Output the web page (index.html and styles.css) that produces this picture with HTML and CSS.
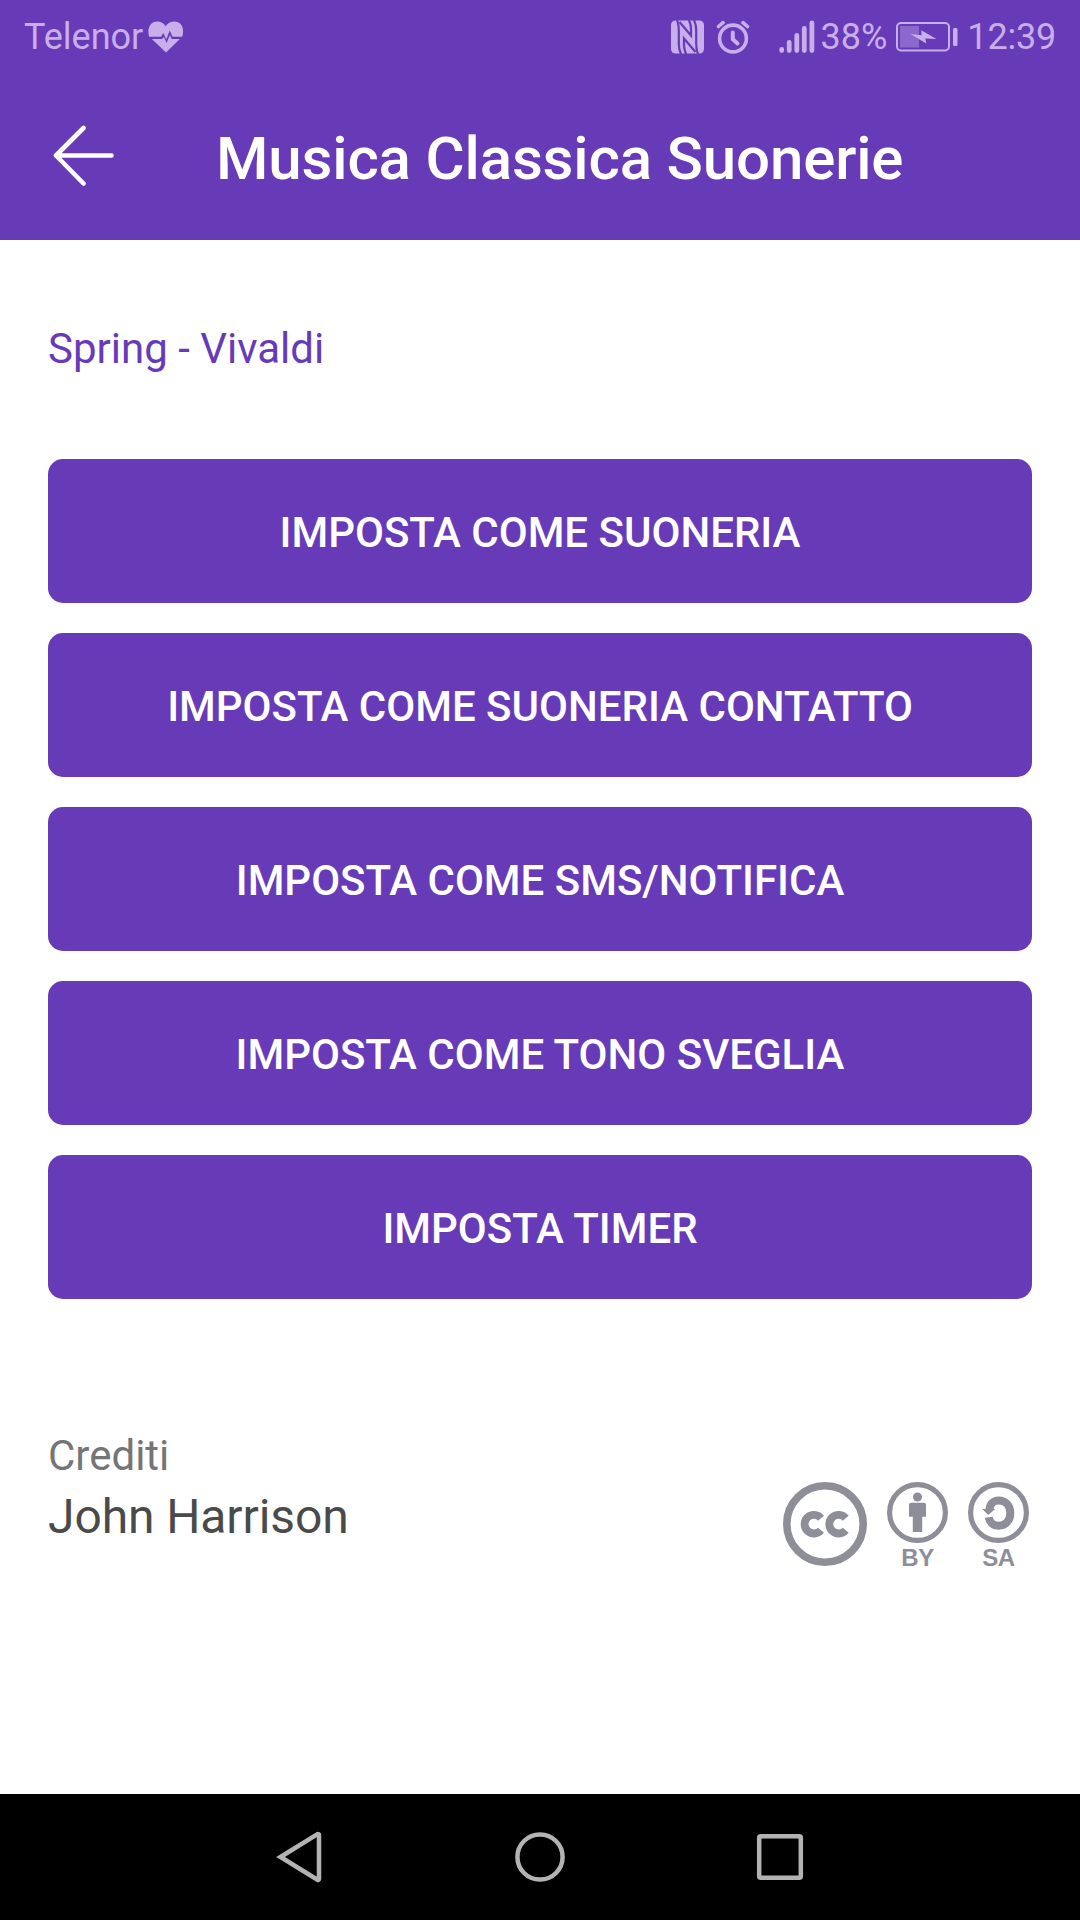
FILE: index.html
```html
<!DOCTYPE html>
<html lang="it">
<head>
  <meta charset="UTF-8">
  <meta name="viewport" content="width=device-width, initial-scale=1.0">
  <title>Musica Classica Suonerie</title>
  <link rel="stylesheet" href="styles.css">
</head>
<body>
  <div class="header">
    <div class="status-bar">
      <span class="carrier">Telenor</span>
      <svg class="icon-heart" width="36" height="32" viewBox="0 0 36 32">
        <path class="fill" d="M1.2 15.8C-1.5 7 3 .6 9 .6c4 0 7 2 8.700 4.700C19.500 2.600 22.500.6 26.500.6c6.500 0 10.500 6.500 7.700 15.200h-9.700l-2.800-6.200-3.400 8.800-3-6.400-2.200 3.800z"/>
        <path class="fill" d="M3.800 18h10.300l1.700-2.300 2.800 6.300 3.300-8 1.800 4h8.200L18 31.500z"/>
      </svg>
      <div class="status-right">
        <svg class="icon-nfc" width="33" height="34" viewBox="0 0 33 34">
          <rect class="fill" x="0" y="0.500" width="33" height="33" rx="4.500"/>
          <path class="cut" d="M6 0C7.800 4 7.800 7 7.800 11v13c0 4 .5 6.500 2.200 10"/>
          <path class="cut" d="M8.500 2L20 15.500V9c0-3-.5-5.500-2-9"/>
          <path class="cut" d="M24.500 32L13 18.500V25c0 3 .5 5.500 2 9"/>
          <path class="cut" d="M27 34c-1.800-4-1.800-7-1.800-11V10c0-4-.5-6.500-2.200-10"/>
        </svg>
        <svg class="icon-alarm" width="34" height="34" viewBox="0 0 34 34">
          <circle class="line" cx="17" cy="18.500" r="13.400" stroke-width="3.600"/>
          <path class="line" stroke-width="3.600" stroke-linecap="round" d="M2.500 6.500L7 2.600M31.500 6.500L27 2.600"/>
          <path class="line" stroke-width="4" stroke-linecap="round" stroke-linejoin="round" d="M16.800 12.500v6.700l4.700 4.300"/>
        </svg>
        <svg class="icon-signal" width="36" height="34" viewBox="0 0 36 34">
          <path class="line" stroke-width="4.800" stroke-linecap="round" d="M2.700 29.500v1M10.200 22.500v8M17.800 15.500v15M25.300 8.500v22M32.900 3v27.500"/>
        </svg>
        <span class="battery-level">38%</span>
        <svg class="icon-battery" width="62" height="30" viewBox="0 0 62 30">
          <rect class="line" x="1" y="1" width="52" height="27.500" rx="4" stroke-width="2"/>
          <rect class="fill charge" x="4" y="4" width="19" height="21.500"/>
          <path class="fill" d="M14.500 12l11 1.200-.2-5L40.500 17l-11.200-.6 1 5z"/>
          <rect class="fill" x="57" y="6" width="4.500" height="18" rx="1.500"/>
        </svg>
        <span class="clock">12:39</span>
      </div>
    </div>
    <div class="toolbar">
      <svg class="icon-back" width="62" height="62" viewBox="0 0 62 62">
        <path d="M30.500 3L3 30.500 30.500 58.500M3 30.500h55.500"/>
      </svg>
      <h1>Musica Classica Suonerie</h1>
    </div>
  </div>

  <div class="container">
    <p class="track">Spring - Vivaldi</p>
    <div class="actions">
      <button type="button">IMPOSTA COME SUONERIA</button>
      <button type="button">IMPOSTA COME SUONERIA CONTATTO</button>
      <button type="button">IMPOSTA COME SMS/NOTIFICA</button>
      <button type="button">IMPOSTA COME TONO SVEGLIA</button>
      <button type="button">IMPOSTA TIMER</button>
    </div>
    <div class="credits">
      <div class="author">
        <p class="label">Crediti</p>
        <p class="name">John Harrison</p>
      </div>
      <div class="license">
        <svg class="cc" width="84" height="84" viewBox="0 0 84 84">
          <circle cx="42" cy="42" r="38.200" stroke-width="7.600"/>
          <path stroke-width="7.800" d="M38 36.200A9.300 9.300 0 1 0 38 48.200M62.700 36.200A9.300 9.300 0 1 0 62.700 48.200"/>
        </svg>
        <div class="badge">
          <svg width="61" height="61" viewBox="0 0 61 61">
            <circle cx="30.500" cy="30.500" r="27.900" stroke-width="5.200"/>
            <circle class="solid" cx="30.500" cy="15" r="4.500"/>
            <path class="solid" d="M24 20.700h13a2 2 0 0 1 2 2v12h-3.800V50h-9.400V34.700H22v-12a2 2 0 0 1 2-2z"/>
          </svg>
          <span>BY</span>
        </div>
        <div class="badge">
          <svg width="61" height="61" viewBox="0 0 61 61">
            <circle cx="30.500" cy="30.500" r="27.900" stroke-width="5.200"/>
            <path stroke-width="8" d="M21.500 27.500C22 22 25.500 18.600 30.700 18.600c7.200 0 11.600 5.400 11.600 12.600s-4.600 12.500-11.600 12.500c-5.300 0-9.300-3.200-10-8.400"/>
            <path class="solid" d="M14.300 27h13l-7.200 6z"/>
          </svg>
          <span>SA</span>
        </div>
      </div>
    </div>
  </div>

  <div class="nav-bar">
    <svg width="52" height="52" viewBox="0 0 52 52">
      <path d="M6.500 26L43.500 3.200a1 1 0 0 1 1.500 1v43.600a1 1 0 0 1-1.500 1z"/>
    </svg>
    <svg width="52" height="52" viewBox="0 0 52 52">
      <circle cx="26" cy="26" r="22.600"/>
    </svg>
    <svg width="52" height="52" viewBox="0 0 52 52">
      <rect x="5.200" y="5.200" width="41.600" height="41.600" rx="1.500"/>
    </svg>
  </div>
</body>
</html>
```

FILE: styles.css
```css
/* Global Styles */
* {
  box-sizing: border-box;
}
body {
  font-family: Roboto, sans-serif;
  background: #fff;
  margin: 0;
  height: 1920px;
  display: flex;
  flex-direction: column;
}
svg {
  display: block;
  flex: none;
}
p, h1 {
  margin: 0;
}
/* Header */
.header {
  background: #673ab7;
  color: #fff;
  height: 240px;
}
.status-bar {
  display: flex;
  align-items: center;
  height: 72px;
  padding: 2px 24px 0;
  font-size: 36px;
  line-height: 42px;
  color: #c8aeea;
}
.status-bar .fill {
  fill: #c8aeea;
}
.status-bar .line {
  fill: none;
  stroke: #c8aeea;
}
.status-bar .charge {
  opacity: 0.4;
}
.status-bar .cut {
  fill: none;
  stroke: #673ab7;
  stroke-width: 2.2;
}
.icon-heart {
  margin-left: 5px;
}
.status-right {
  display: flex;
  align-items: center;
  margin-left: auto;
}
.icon-alarm {
  margin-left: 12px;
}
.icon-signal {
  margin-left: 29px;
}
.battery-level {
  margin-left: 6px;
}
.icon-battery {
  margin-left: 9px;
}
.clock {
  margin-left: 9px;
  letter-spacing: -0.2px;
}
.toolbar {
  display: flex;
  align-items: center;
  height: 168px;
  padding: 0 53px;
}
.icon-back path {
  fill: none;
  stroke: #fff;
  stroke-width: 4.6;
  stroke-linecap: round;
  stroke-linejoin: round;
}
.toolbar h1 {
  font-size: 60px;
  font-weight: 500;
  line-height: 70px;
  letter-spacing: -0.15px;
  margin: 6px 0 0 101px;
  white-space: nowrap;
}
/* Contenuto */
.container {
  flex: 1;
  padding: 84px 48px 0;
}
.track {
  font-size: 42px;
  line-height: 50px;
  color: #673ab7;
}
.actions {
  display: flex;
  flex-direction: column;
  gap: 30px;
  margin-top: 85px;
}
button {
  height: 144px;
  padding: 2px 0 0;
  border: none;
  border-radius: 15px;
  background: #673ab7;
  color: #fff;
  font-family: inherit;
  font-size: 42px;
  font-weight: 500;
}
.credits {
  display: flex;
  justify-content: space-between;
  margin-top: 132px;
}
.label {
  font-size: 42px;
  line-height: 50px;
  color: #757575;
}
.name {
  font-size: 48px;
  line-height: 56px;
  letter-spacing: -0.1px;
  margin-top: 8px;
  color: #4a4a4a;
}
/* Licenza Creative Commons */
.license {
  display: flex;
  gap: 20px;
  margin: 51px 3px 0 0;
}
.license svg {
  fill: none;
  stroke: #8e8e99;
}
.license .solid {
  fill: #8e8e99;
  stroke: none;
}
.badge {
  display: flex;
  flex-direction: column;
  align-items: center;
  width: 61px;
}
.badge span {
  font-family: "Liberation Sans", Arial, sans-serif;
  font-size: 24px;
  font-weight: bold;
  line-height: 28px;
  margin-top: 1px;
  letter-spacing: -0.5px;
  color: #8e8e99;
}
/* Barra di navigazione */
.nav-bar {
  display: flex;
  justify-content: center;
  align-items: center;
  gap: 188px;
  height: 126px;
  background: #000;
}
.nav-bar svg {
  fill: none;
  stroke: #b3b3b3;
  stroke-width: 4.5;
}
```
